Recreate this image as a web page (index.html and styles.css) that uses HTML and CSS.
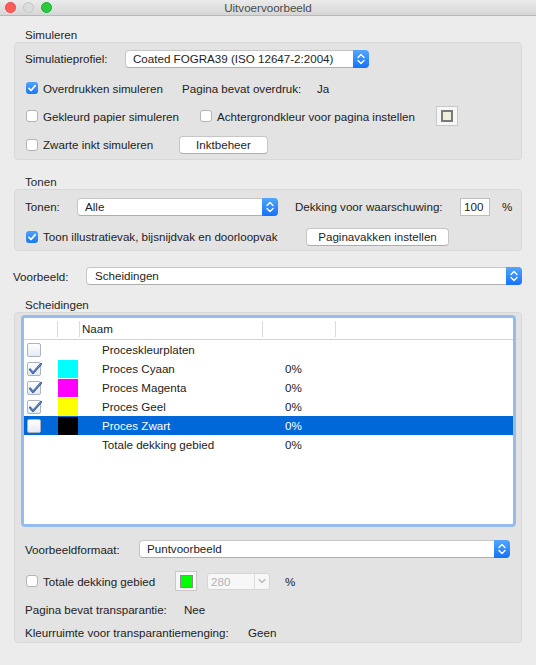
FILE: index.html
```html
<!DOCTYPE html>
<html lang="nl">
<head>
<meta charset="utf-8">
<title>Uitvoervoorbeeld</title>
<link rel="stylesheet" href="styles.css">
</head>
<body>
<div class="window">
  <div class="titlebar">
    <div class="lights"><span class="light red"></span><span class="light grey"></span><span class="light green"></span></div>
    <div class="title">Uitvoervoorbeeld</div>
    <div></div>
  </div>

  <div class="body">
    <div class="section-label h26">Simuleren</div>
    <div class="group">
      <div class="row h31 pl10">
        <span class="cell w100">Simulatieprofiel:</span>
        <div class="popup w244"><span class="ptext">Coated FOGRA39 (ISO 12647-2:2004)</span><span class="stepper"><svg width="16" height="16" viewBox="0 0 16 16"><path d="M5 6.5 L8 3.5 L11 6.5 M5 9.5 L8 12.5 L11 9.5" fill="none" stroke="#fff" stroke-width="1.4" stroke-linecap="round" stroke-linejoin="round"/></svg></span></div>
      </div>
      <div class="row h28 pl11">
        <span class="cell w156"><span class="cb on"><svg width="12" height="12" viewBox="0 0 12 12"><path d="M3 6.3 L5.1 8.5 L9.2 3.6" fill="none" stroke="#fff" stroke-width="1.7" stroke-linecap="round" stroke-linejoin="round"/></svg></span>Overdrukken simuleren</span>
        <span class="cell w135">Pagina bevat overdruk:</span>
        <span>Ja</span>
      </div>
      <div class="row h28 pl11">
        <span class="cell w174"><span class="cb"></span>Gekleurd papier simuleren</span>
        <span class="cell w236"><span class="cb"></span>Achtergrondkleur voor pagina instellen</span>
        <span class="well"><span class="swatch cream"></span></span>
      </div>
      <div class="row h29 pl11">
        <span class="cell w153"><span class="cb"></span>Zwarte inkt simuleren</span>
        <span class="btn w89">Inktbeheer</span>
      </div>
    </div>

    <div class="section-label h29">Tonen</div>
    <div class="group">
      <div class="row h33 pl10">
        <span class="cell w52">Tonen:</span>
        <div class="popup w201"><span class="ptext">Alle</span><span class="stepper"><svg width="16" height="16" viewBox="0 0 16 16"><path d="M5 6.5 L8 3.5 L11 6.5 M5 9.5 L8 12.5 L11 9.5" fill="none" stroke="#fff" stroke-width="1.4" stroke-linecap="round" stroke-linejoin="round"/></svg></span></div>
        <span class="cell w165 ml17">Dekking voor waarschuwing:</span>
        <span class="field">100</span>
        <span class="ml12">%</span>
      </div>
      <div class="row h27 pl11">
        <span class="cell w280"><span class="cb on"><svg width="12" height="12" viewBox="0 0 12 12"><path d="M3 6.3 L5.1 8.5 L9.2 3.6" fill="none" stroke="#fff" stroke-width="1.7" stroke-linecap="round" stroke-linejoin="round"/></svg></span>Toon illustratievak, bijsnijdvak en doorloopvak</span>
        <span class="btn w143">Paginavakken instellen</span>
      </div>
    </div>

    <div class="row vb-row">
      <span class="cell w73">Voorbeeld:</span>
      <div class="popup grow"><span class="ptext pl8">Scheidingen</span><span class="stepper"><svg width="16" height="16" viewBox="0 0 16 16"><path d="M5 6.5 L8 3.5 L11 6.5 M5 9.5 L8 12.5 L11 9.5" fill="none" stroke="#fff" stroke-width="1.4" stroke-linecap="round" stroke-linejoin="round"/></svg></span></div>
    </div>

    <div class="section-label h27">Scheidingen</div>
    <div class="group g3">
      <div class="table">
        <div class="thead">
          <span class="th"></span>
          <span class="th"></span>
          <span class="th name">Naam</span>
          <span class="th"></span>
          <span class="th"></span>
        </div>
        <div class="tr">
          <span class="td"><span class="acb"></span></span>
          <span class="td"></span>
          <span class="td txt">Proceskleurplaten</span>
          <span class="td txt"></span>
          <span class="td"></span>
        </div>
        <div class="tr">
          <span class="td"><span class="acb"><svg width="17" height="14" viewBox="0 0 17 14"><path d="M3 7.5 L6 11 L14 2" fill="none" stroke="#35589a" stroke-width="2.2" stroke-linecap="round" stroke-linejoin="round"/><path d="M3.3 7.6 L6 10.6 L13.6 2.3" fill="none" stroke="#7fa6de" stroke-width="0.8" stroke-linecap="round"/></svg></span></span>
          <span class="td"><span class="sw" style="background:#00ffff"></span></span>
          <span class="td txt">Proces Cyaan</span>
          <span class="td txt">0%</span>
          <span class="td"></span>
        </div>
        <div class="tr">
          <span class="td"><span class="acb"><svg width="17" height="14" viewBox="0 0 17 14"><path d="M3 7.5 L6 11 L14 2" fill="none" stroke="#35589a" stroke-width="2.2" stroke-linecap="round" stroke-linejoin="round"/><path d="M3.3 7.6 L6 10.6 L13.6 2.3" fill="none" stroke="#7fa6de" stroke-width="0.8" stroke-linecap="round"/></svg></span></span>
          <span class="td"><span class="sw" style="background:#ff00ff"></span></span>
          <span class="td txt">Proces Magenta</span>
          <span class="td txt">0%</span>
          <span class="td"></span>
        </div>
        <div class="tr">
          <span class="td"><span class="acb"><svg width="17" height="14" viewBox="0 0 17 14"><path d="M3 7.5 L6 11 L14 2" fill="none" stroke="#35589a" stroke-width="2.2" stroke-linecap="round" stroke-linejoin="round"/><path d="M3.3 7.6 L6 10.6 L13.6 2.3" fill="none" stroke="#7fa6de" stroke-width="0.8" stroke-linecap="round"/></svg></span></span>
          <span class="td"><span class="sw" style="background:#ffff00"></span></span>
          <span class="td txt">Proces Geel</span>
          <span class="td txt">0%</span>
          <span class="td"></span>
        </div>
        <div class="tr sel">
          <span class="td"><span class="acb"></span></span>
          <span class="td"><span class="sw" style="background:#000000"></span></span>
          <span class="td txt">Proces Zwart</span>
          <span class="td txt">0%</span>
          <span class="td"></span>
        </div>
        <div class="tr">
          <span class="td"></span>
          <span class="td"></span>
          <span class="td txt">Totale dekking gebied</span>
          <span class="td txt">0%</span>
          <span class="td"></span>
        </div>
      </div>

      <div class="row h44 pl10">
        <span class="cell w114">Voorbeeldformaat:</span>
        <div class="popup w371"><span class="ptext">Puntvoorbeeld</span><span class="stepper"><svg width="16" height="16" viewBox="0 0 16 16"><path d="M5 6.5 L8 3.5 L11 6.5 M5 9.5 L8 12.5 L11 9.5" fill="none" stroke="#fff" stroke-width="1.4" stroke-linecap="round" stroke-linejoin="round"/></svg></span></div>
      </div>
      <div class="row h20 pl11">
        <span class="cell w149"><span class="cb"></span>Totale dekking gebied</span>
        <span class="well"><span class="swatch green"></span></span>
        <span class="combo"><span class="ctext">280</span><span class="carrow"><svg width="10" height="8" viewBox="0 0 10 8"><path d="M2 2.5 L5 5.5 L8 2.5" fill="none" stroke="#b9b9b9" stroke-width="1.3" stroke-linecap="round" stroke-linejoin="round"/></svg></span></span>
        <span class="ml15">%</span>
      </div>
      <div class="row h20 pl10 mt8">
        <span class="cell w159">Pagina bevat transparantie:</span>
        <span>Nee</span>
      </div>
      <div class="row h20 pl10 mt3">
        <span class="cell w223">Kleurruimte voor transparantiemenging:</span>
        <span>Geen</span>
      </div>
    </div>
  </div>
</div>
</body>
</html>
```

FILE: styles.css
```css
html, body {
  margin: 0;
  padding: 0;
}
body {
  background: #ececec;
  font-family: "Liberation Sans", Arial, sans-serif;
  font-size: 11.6px;
  color: #222222;
  width: 536px;
  height: 665px;
  overflow: hidden;
}
.window {
  width: 536px;
}
.titlebar {
  height: 15px;
  border-bottom: 1px solid #b8b8b8;
  background: linear-gradient(#ebebeb, #d6d6d6);
  display: grid;
  grid-template-columns: 1fr auto 1fr;
  align-items: center;
}
.lights {
  display: flex;
  gap: 7px;
  padding-left: 5px;
  align-items: center;
}
.light {
  width: 11px;
  height: 11px;
  border-radius: 50%;
  box-sizing: border-box;
}
.light.red { background: #fc5f57; border: 1px solid #e2463f; }
.light.grey { background: #dcdcdc; border: 1px solid #c4c4c4; }
.light.green { background: #2ac93f; border: 1px solid #1dad2b; }
.title {
  color: #4b4b4b;
  font-size: 11.6px;
}

.body {
  padding: 0 14px;
}
.section-label {
  display: flex;
  align-items: flex-end;
  padding-left: 11px;
  line-height: 14px;
  color: #262626;
}
.h26 { height: 26px; }
.h27 { height: 27px; }
.h29 { height: 29px; }

.group {
  background: #e3e3e3;
  border: 1px solid #d9d9d9;
  border-radius: 4px;
}
.g3 {
  padding-top: 2px;
}

.row {
  display: flex;
  align-items: center;
}
.h20 { height: 20px; }
.h27 { height: 27px; }
.h28 { height: 28px; }
.h29 { height: 29px; }
.h31 { height: 31px; }
.h33 { height: 33px; }
.h44 { height: 44px; }
.pl10 { padding-left: 10px; }
.pl11 { padding-left: 11px; }
.mt8 { margin-top: 8px; }
.mt3 { margin-top: 3px; }
.ml12 { margin-left: 12px; }
.ml15 { margin-left: 15px; }
.ml17 { margin-left: 17px; }

.cell {
  display: flex;
  align-items: center;
  flex: none;
  white-space: nowrap;
}
.w52 { width: 52px; }
.w73 { width: 73px; }
.w89 { width: 89px; }
.w100 { width: 100px; }
.w114 { width: 114px; }
.w135 { width: 135px; }
.w143 { width: 143px; }
.w149 { width: 149px; }
.w153 { width: 153px; }
.w156 { width: 156px; }
.w159 { width: 159px; }
.w165 { width: 165px; }
.w174 { width: 174px; }
.w201 { width: 201px; }
.w223 { width: 223px; }
.w236 { width: 236px; }
.w244 { width: 244px; }
.w280 { width: 280px; }
.w371 { width: 371px; }
.grow { flex: 1; }

.vb-row {
  height: 18px;
  margin-top: 16px;
  margin-left: -1px;
}

/* checkbox */
.cb {
  width: 12px;
  height: 12px;
  box-sizing: border-box;
  border-radius: 3px;
  background: #ffffff;
  border: 1px solid #b4b4b4;
  margin-right: 5px;
  flex: none;
  display: flex;
  align-items: center;
  justify-content: center;
}
.cb.on {
  background: linear-gradient(#4fa3fb, #1d78f3);
  border: none;
}
.cb svg { display: block; }

/* popup */
.popup {
  display: flex;
  height: 18px;
  box-sizing: border-box;
  background: #ffffff;
  border: 1px solid #c6c6c6;
  border-bottom-color: #afafaf;
  border-radius: 4px;
  flex: none;
}
.popup.grow { flex: 1; }
.ptext {
  flex: 1;
  padding-left: 7px;
  line-height: 16px;
  white-space: nowrap;
  color: #1e1e1e;
}
.ptext.pl8 { padding-left: 8px; }
.stepper {
  width: 16px;
  margin: -1px -1px -1px 0;
  background: linear-gradient(#51a7ff, #1672f7);
  border-radius: 0 4px 4px 0;
  display: flex;
  align-items: center;
  justify-content: center;
}
.stepper svg { display: block; }

/* button */
.btn {
  height: 18px;
  box-sizing: border-box;
  background: #ffffff;
  border: 1px solid #c6c6c6;
  border-bottom-color: #adadad;
  border-radius: 4px;
  display: flex;
  align-items: center;
  justify-content: center;
  flex: none;
  color: #1e1e1e;
}

/* colour well */
.well {
  width: 22px;
  height: 20px;
  box-sizing: border-box;
  border: 1px solid #c9c9c9;
  background: #f6f6f6;
  display: flex;
  align-items: center;
  justify-content: center;
  flex: none;
}
.swatch {
  width: 12px;
  height: 12px;
  box-sizing: border-box;
  border: 2px solid #7a7a7a;
}
.swatch.cream { background: #efefd9; }
.swatch.green { background: #00ff00; border-color: #8a8a8a; border-width: 1px; width: 13px; height: 13px; }

/* text field */
.field {
  width: 30px;
  height: 18px;
  box-sizing: border-box;
  background: #ffffff;
  border: 1px solid #bdbdbd;
  padding-left: 3px;
  line-height: 16px;
  flex: none;
}

/* disabled combo */
.combo {
  margin-left: 10px;
  width: 63px;
  height: 17px;
  box-sizing: border-box;
  border: 1px solid #d6d6d6;
  border-radius: 3px;
  background: #f7f7f7;
  display: flex;
  flex: none;
}
.ctext {
  flex: 1;
  color: #b4b4b4;
  padding-left: 3px;
  line-height: 15px;
}
.carrow {
  width: 14px;
  border-left: 1px solid #dddddd;
  display: flex;
  align-items: center;
  justify-content: center;
}

/* table */
.table {
  margin: 0 5px 0 6px;
  height: 212px;
  box-sizing: border-box;
  border: 3px solid #95bdec;
  border-radius: 4px;
  background: #ffffff;
}
.thead {
  display: grid;
  grid-template-columns: 33px 22px 183px 73px 1fr;
  height: 22px;
  box-sizing: border-box;
  border-bottom: 1px solid #d4d4d4;
  padding: 3px 0 2px;
}
.th {
  line-height: 16px;
  color: #222222;
}
.th + .th {
  border-left: 1px solid #dcdcdc;
}
.th.name { padding-left: 2px; }
.tr {
  display: grid;
  grid-template-columns: 33px 22px 183px 73px 1fr;
  height: 19px;
  align-items: center;
  color: #1c1c1c;
}
.tr.sel {
  background: #0068d9;
  color: #ffffff;
}
.td {
  display: flex;
  align-items: center;
  height: 19px;
  white-space: nowrap;
}
.td.txt { padding-left: 23px; }
.acb {
  margin-left: 3px;
  width: 14px;
  height: 14px;
  box-sizing: border-box;
  border: 1px solid #a9b3c2;
  border-radius: 2px;
  background: linear-gradient(#ffffff, #e6ebf2);
  position: relative;
}
.acb svg {
  position: absolute;
  left: -1px;
  top: -1px;
  overflow: visible;
}
.sw {
  margin-left: 1px;
  width: 20px;
  height: 18px;
}
```
